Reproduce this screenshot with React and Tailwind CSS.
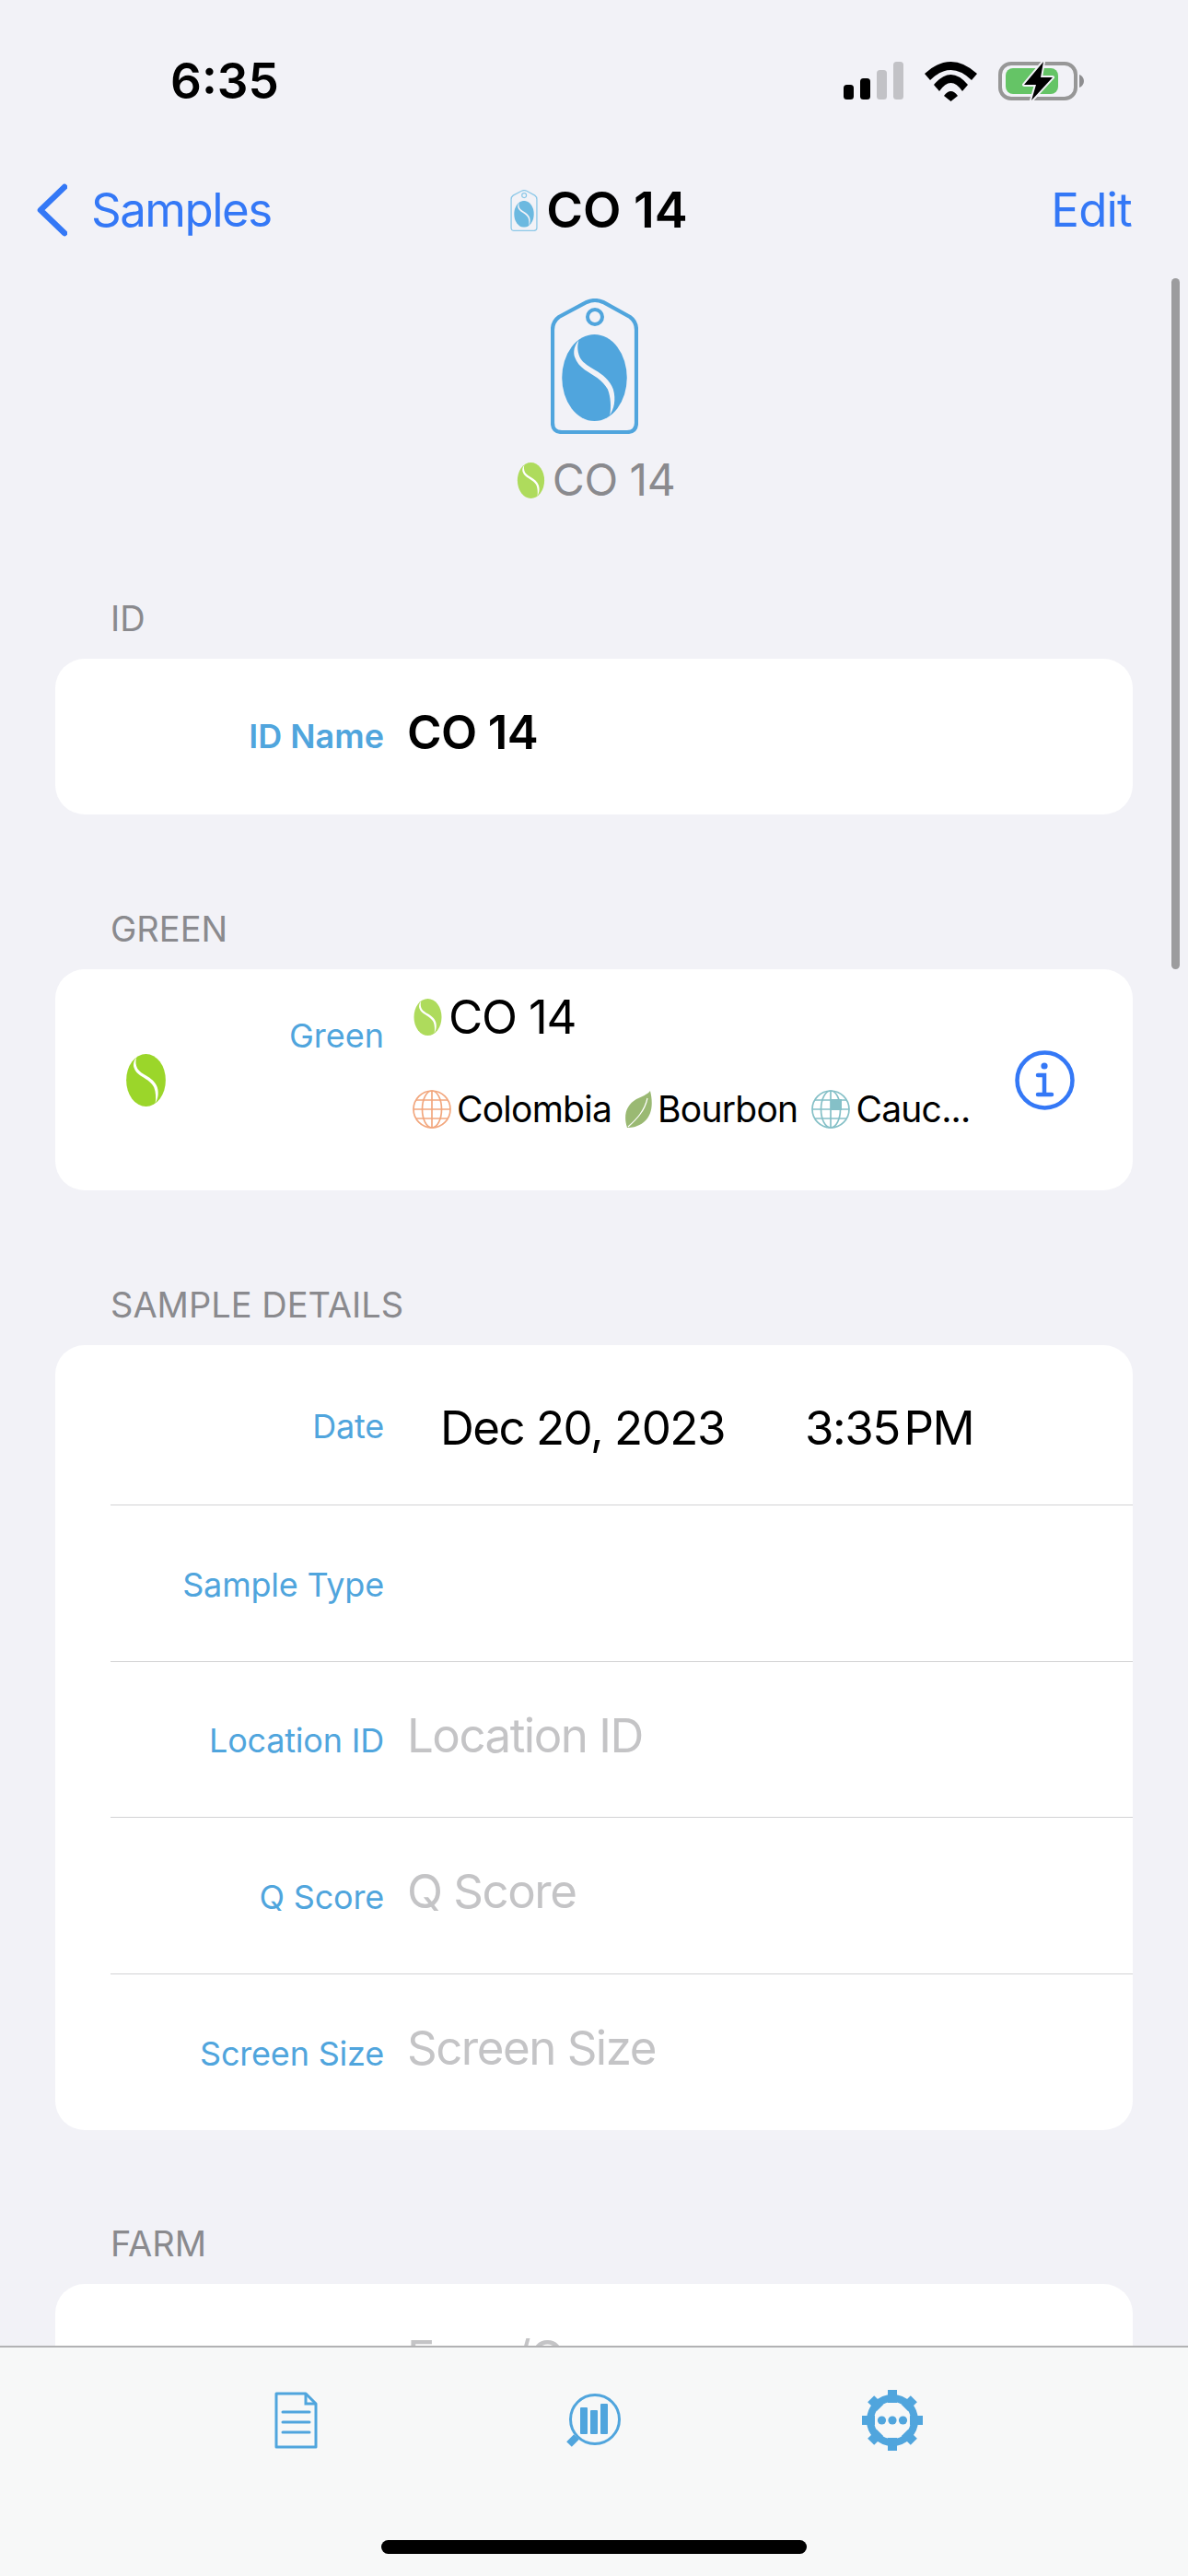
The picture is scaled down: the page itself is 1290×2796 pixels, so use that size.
import React from "react";

const S_PATH = "M55 20 C40 35 36 60 42 75 C48 92 60 106 75 116 C100 132 135 150 150 180 C160 205 162 240 157 265 C170 245 178 215 168 180 C158 150 130 130 110 118 C90 106 70 95 60 78 C52 62 48 42 55 20 Z";

const Bean = ({ w, h, color, className = "" }) => (
  <svg width={w} height={h} viewBox="0 0 213 284" className={"shrink-0 " + className}>
    <ellipse cx="106.5" cy="142" rx="106.5" ry="142" fill={color} />
    <path d={S_PATH} fill="#fff" />
  </svg>
);

const TagIcon = ({ w, h, color, beanColor }) => (
  <svg width={w} height={h} viewBox="0 0 95 147" className="shrink-0">
    <path d="M2 34 Q2 25 9 20 L39 4 Q48 0 57 4 L86 20 Q93 25 93 34 V135 Q93 145 83 145 H12 Q2 145 2 135 Z" fill="none" stroke={color} strokeWidth="4.2" />
    <circle cx="48" cy="20" r="8" fill="none" stroke={color} strokeWidth="4" />
    <svg x="12" y="39" width="71" height="94" viewBox="0 0 213 284">
      <ellipse cx="106.5" cy="142" rx="106.5" ry="142" fill={beanColor} />
      <path d={S_PATH} fill="#f2f2f7" />
    </svg>
  </svg>
);

const Globe = ({ color, square }) => (
  <svg width="42" height="42" viewBox="0 0 42 42" fill="none" stroke={color} strokeWidth="1.7" className="shrink-0">
    {square && <rect x="21" y="10" width="12" height="12" fill={color} stroke="none" />}
    <circle cx="21" cy="21" r="20" />
    <ellipse cx="21" cy="21" rx="10.5" ry="20" />
    <path d="M21 1 V41 M4 11 H38 M1 21 H41 M4 31 H38" />
  </svg>
);

const Leaf = () => (
  <svg width="29" height="40" viewBox="0 0 29 40" className="shrink-0">
    <path d="M27 0 C30 12 30 26 20 34 C14 39 7 40 2 40 C-2 28 0 16 12 9 C18 6 24 4 27 0 Z" fill="#9ab973" />
    <path d="M3 39 C12 31 21 22 24 8" fill="none" stroke="#fff" strokeWidth="1.2" />
  </svg>
);

const Signal = () => (
  <svg width="65" height="41" viewBox="0 0 65 41" className="shrink-0">
    <rect x="0" y="25" width="11" height="16" rx="3.5" fill="#000" />
    <rect x="18" y="18" width="11" height="23" rx="3.5" fill="#000" />
    <rect x="36" y="9" width="11" height="32" rx="3.5" fill="#c2c2c6" />
    <rect x="54" y="0" width="11" height="41" rx="3.5" fill="#c2c2c6" />
  </svg>
);

const Wifi = () => (
  <svg width="57" height="43" viewBox="0 0 57 43" className="shrink-0">
    <path d="M0 13 Q28.5 -13 57 13 L51 20 Q28.5 -2 6 20 Z M10 25 Q28.5 3 47 25 L41 32 Q28.5 14 16 32 Z M21 37 Q28.5 27 36 37 L28.5 43 Z" fill="#000" />
  </svg>
);

const Battery = () => (
  <svg width="93" height="42" viewBox="0 0 93 42" className="shrink-0">
    <rect x="2" y="2" width="82" height="38" rx="12" fill="none" stroke="#979797" strokeWidth="4" />
    <rect x="8" y="7" width="57" height="28" rx="8" fill="#65c466" />
    <path d="M88 14 C91 15 93 18 93 21 C93 24 91 27 88 28 Z" fill="#8e8e90" />
    <path d="M49 0 L28 25 H41 L36 42 L59 17 H46 Z" fill="#000" stroke="#f2f2f7" strokeWidth="4" paintOrder="stroke" strokeLinejoin="round" />
  </svg>
);

const Chevron = () => (
  <svg width="33" height="58" viewBox="0 0 33 58" fill="none" stroke="#3478f6" strokeWidth="6.5" strokeLinecap="round" strokeLinejoin="round" className="shrink-0">
    <path d="M30 4 L4 29 L30 54" />
  </svg>
);

const Info = () => (
  <svg width="65" height="65" viewBox="0 0 65 65" fill="none" stroke="#3478f6" strokeWidth="4.5" strokeLinecap="round" className="shrink-0">
    <circle cx="32.5" cy="32.5" r="30" />
    <circle cx="32" cy="17" r="3.6" fill="#3478f6" stroke="none" />
    <path d="M25 27 H32 V48 M25 48 H40" />
  </svg>
);

const DocIcon = () => (
  <svg width="47" height="62" viewBox="0 0 47 62" fill="none" stroke="#50a5dd" strokeWidth="3" className="shrink-0">
    <path d="M2 2 H34 L45 13 V60 H2 Z" strokeLinejoin="round" />
    <path d="M34 2 V13 H45" />
    <path d="M9 22 H38 M9 33 H38 M9 44 H38" strokeLinecap="round" />
  </svg>
);

const SearchIcon = () => (
  <svg width="60" height="59" viewBox="0 0 60 59" className="shrink-0">
    <circle cx="32" cy="28" r="26.5" fill="none" stroke="#50a5dd" strokeWidth="3" />
    <rect x="16" y="15" width="8" height="29" rx="1" fill="#50a5dd" />
    <rect x="27" y="18" width="8" height="26" rx="1" fill="#50a5dd" />
    <rect x="38" y="11" width="8" height="33" rx="1" fill="#50a5dd" />
    <path d="M12 47 L4 55" stroke="#50a5dd" strokeWidth="8" />
  </svg>
);

const GearIcon = () => (
  <svg width="66" height="66" viewBox="0 0 66 66" className="shrink-0">
    {[0, 45, 90, 135, 180, 225, 270, 315].map((a) => (
      <rect key={a} x="28" y="0" width="10" height="14" fill="#50a5dd" transform={`rotate(${a} 33 33)`} />
    ))}
    <circle cx="33" cy="33" r="24" fill="none" stroke="#50a5dd" strokeWidth="8" />
    <circle cx="21.5" cy="33" r="4.6" fill="#50a5dd" />
    <circle cx="33" cy="33" r="4.6" fill="#50a5dd" />
    <circle cx="44.5" cy="33" r="4.6" fill="#50a5dd" />
  </svg>
);

const Section = ({ title, children, headClass = "h-[169px]" }) => (
  <section>
    <div className={headClass + " flex items-end pl-[120px] pb-[24px] text-[38px] leading-[40px] text-[#8a8a8e]"}>{title}</div>
    <div className="mx-[60px] bg-white rounded-[32px] overflow-hidden">{children}</div>
  </section>
);

const Row = ({ label, bold, children, last, heightClass = "h-[169.5px]", valueClass = "pb-[8px]" }) => (
  <div className={"ml-[60px] flex items-center " + heightClass + " " + (last ? "" : "border-b border-[#d2d2d4]")}>
    <div className={"w-[297px] text-right text-[36px] " + (bold ? "font-semibold pb-[2px]" : "pt-[3px] tracking-[-0.2px]") + " text-[#50a5dd]"}>{label}</div>
    <div className={"ml-[25px] text-[51px] leading-[60px] tracking-[-1.5px] " + valueClass}>{children}</div>
  </div>
);

const Placeholder = ({ children }) => <span className="text-[#c4c4c6]">{children}</span>;

export default function App() {
  return (
    <div className="w-[1290px] h-[2796px] relative overflow-hidden flex flex-col bg-[#f2f2f7] text-black font-['Inter',sans-serif]">
      <main className="flex-1 min-h-0 overflow-hidden">
        <div className="h-[162px] flex items-center pt-[14px] pl-[185px] pr-[113px] justify-between">
          <span className="text-[53px] leading-none font-semibold">6:35</span>
          <div className="flex items-start">
            <Signal />
            <div className="ml-[23px]"><Wifi /></div>
            <div className="ml-[23px]"><Battery /></div>
          </div>
        </div>
        <div className="h-[132px] grid grid-cols-3 items-center text-[51px] leading-[60px]">
          <div className="flex items-center pl-[40px] text-[#3478f6]">
            <Chevron />
            <span className="ml-[26px] tracking-[-1.5px]">Samples</span>
          </div>
          <div className="flex items-center justify-center pl-[10px]">
            <TagIcon w={32} h={45} color="#8cc8e8" beanColor="#6cb9e0" />
            <span className="ml-[8px] text-[54px] font-semibold">CO 14</span>
          </div>
          <div className="text-right pr-[61px] text-[#3478f6] tracking-[-0.8px]">Edit</div>
        </div>

        <div className="h-[252px] pt-[30px] flex flex-col items-center">
          <TagIcon w={95} h={147} color="#50a5dd" beanColor="#50a5dd" />
          <div className="mt-[23px] pl-[4px] flex items-center text-[48px] leading-[54px] text-[#8a8a8e] -tracking-[0.5px]">
            <Bean w={31} h={39} color="#aedb5c" />
            <span className="ml-[8px]">CO 14</span>
          </div>
        </div>

        <Section title="ID">
          <Row label="ID Name" bold last heightClass="h-[169px]" valueClass="pb-[10px]">
            <span className="font-semibold tracking-[-0.6px]">CO 14</span>
          </Row>
        </Section>

        <Section title="GREEN" headClass="h-[168px]">
          <div className="h-[240px] flex items-center pl-[77px]">
            <Bean w={43} h={57} color="#9bd62a" />
            <div className="w-[237px] text-right text-[36px] mb-[96px] text-[#50a5dd]">Green</div>
            <div className="ml-[26px] w-[659px] mb-[42px] flex flex-col">
              <div className="flex items-center pl-[5px] h-[60px] text-[51px] tracking-[-1.2px]">
                <Bean w={33} h={40} color="#aedb5c" />
                <span className="ml-[6px]">CO 14</span>
              </div>
              <div className="flex items-center mt-[46px] pl-[5px] text-[39px] leading-[48px] tracking-[-0.75px]">
                <Globe color="#f2a77e" />
                <span className="ml-[6px]">Colombia</span>
                <span className="ml-[15px]"><Leaf /></span>
                <span className="ml-[6px]">Bourbon</span>
                <span className="ml-[15px]"><Globe color="#85c0c7" square /></span>
                <span className="ml-[6px]">Cauc...</span>
              </div>
            </div>
            <Info />
          </div>
        </Section>

        <Section title="SAMPLE DETAILS" headClass="h-[168px]">
          <Row label="Date" heightClass="h-[174px]" valueClass="pt-[6px]">
            <div className="flex pl-[36px]">
              <span className="w-[396px]">Dec 20, 2023</span>
              <span className="[word-spacing:-8px]">3:35 PM</span>
            </div>
          </Row>
          <Row label="Sample Type" />
          <Row label="Location ID"><Placeholder>Location ID</Placeholder></Row>
          <Row label="Q Score"><Placeholder>Q Score</Placeholder></Row>
          <Row label="Screen Size" last><Placeholder>Screen Size</Placeholder></Row>
        </Section>

        <Section title="FARM" headClass="h-[167px]">
          <Row label=""><Placeholder>Farm/Owner</Placeholder></Row>
        </Section>
      </main>

      <footer className="h-[250px] shrink-0 border-t-[2px] border-[#b2b2b4] bg-[#f7f8f8] flex flex-col">
        <div className="flex items-center pl-[298px] pt-[46px]">
          <DocIcon />
          <div className="ml-[269px]"><SearchIcon /></div>
          <div className="ml-[262px]"><GearIcon /></div>
        </div>
        <div className="mt-[97px] mx-auto w-[462px] h-[15px] rounded-full bg-black" />
      </footer>

      <div className="absolute left-[1272px] top-[302px] w-[9px] h-[750px] rounded-full bg-[#9c9c9e]" />
    </div>
  );
}
